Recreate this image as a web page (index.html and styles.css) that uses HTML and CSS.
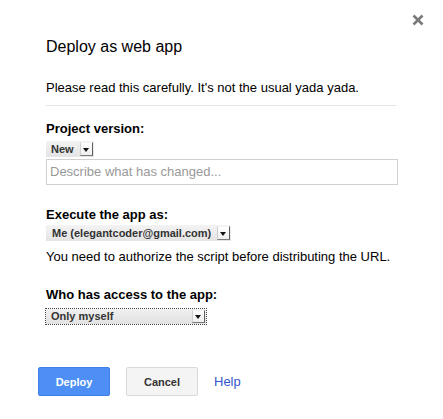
FILE: index.html
```html
<!DOCTYPE html>
<html>
<head>
<meta charset="utf-8">
<link rel="stylesheet" href="styles.css">
</head>
<body>
<div class="dialog">
  <button class="close" aria-label="Close">
    <svg width="12" height="12" viewBox="0 0 12 12"><path d="M1.5 1.5 L10.5 10.5 M10.5 1.5 L1.5 10.5" stroke="#7a7a7a" stroke-width="2.6" stroke-linecap="butt"/></svg>
  </button>
  <h1 class="title">Deploy as web app</h1>
  <p class="intro">Please read this carefully. It's not the usual yada yada.</p>
  <div class="rule"></div>

  <div class="label first">Project version:</div>
  <div class="select sel-new"><span class="sel-text">New</span><span class="sel-btn"><i class="tri"></i></span></div>
  <div class="textbox">Describe what has changed...</div>

  <div class="label exec">Execute the app as:</div>
  <div class="select sel-me"><span class="sel-text">Me (elegantcoder@gmail.com)</span><span class="sel-btn"><i class="tri"></i></span></div>
  <p class="note">You need to authorize the script before distributing the URL.</p>

  <div class="label who">Who has access to the app:</div>
  <div class="select sel-only focused"><span class="sel-text">Only myself</span><span class="sel-btn"><i class="tri"></i></span></div>

  <div class="actions">
    <button class="btn primary">Deploy</button>
    <button class="btn secondary">Cancel</button>
    <a class="help" href="#">Help</a>
  </div>
</div>
</body>
</html>
```
FILE: styles.css
```css
html, body {
  margin: 0;
  padding: 0;
  background: #fff;
}
body {
  font-family: "Liberation Sans", Arial, sans-serif;
  color: #000;
}
.dialog {
  position: relative;
  width: 443px;
  height: 419px;
  box-sizing: border-box;
  padding: 37px 45px 0 46px;
}
.close {
  position: absolute;
  left: 412px;
  top: 14px;
  width: 12px;
  height: 12px;
  padding: 0;
  border: 0;
  background: none;
  display: block;
}
.close svg { display: block; }
.title {
  margin: 0;
  font-size: 16px;
  font-weight: normal;
  line-height: 20px;
  color: #000;
}
.intro {
  margin: 23px 0 0;
  font-size: 13px;
  line-height: 16px;
}
.rule {
  margin-top: 9px;
  width: 350px;
  height: 1px;
  background: #e5e5e5;
}
.label {
  font-size: 13px;
  font-weight: bold;
  line-height: 16px;
}
.label.first { margin-top: 15px; }
.label.exec { margin-top: 22px; }
.label.who { margin-top: 22px; }
.select {
  display: flex;
  align-items: center;
  box-sizing: border-box;
  height: 16px;
  margin-top: 2px;
  background: linear-gradient(#f3f3f3, #e4e4e4);
  font-size: 11px;
  font-weight: bold;
  color: #333;
}
.sel-text {
  flex: 1;
  padding-left: 5px;
  line-height: 16px;
  white-space: nowrap;
}
.sel-btn {
  position: relative;
  width: 13px;
  height: 14px;
  margin-right: 1px;
  background: linear-gradient(#ffffff, #eeeeee);
  border-right: 1px solid #5e5e5e;
  border-bottom: 1px solid #7a7a7a;
  border-left: 1px solid #d0d0d0;
  border-top: 1px solid #f4f4f4;
  box-sizing: border-box;
}
.tri {
  position: absolute;
  left: 2px;
  top: 5px;
  width: 0;
  height: 0;
  border-left: 3.5px solid transparent;
  border-right: 3.5px solid transparent;
  border-top: 4px solid #111;
}
.sel-new { width: 48px; margin-top: 4px; }
.sel-me { width: 185px; margin-top: 2px; }
.sel-me .sel-text { padding-left: 6px; }
.sel-only {
  width: 160px;
  height: 15px;
  margin-top: 6px;
  outline: 1px dotted #444;
  outline-offset: 0;
  background: linear-gradient(#f0f0f0, #e2e2e2);
}
.sel-only .sel-text { line-height: 15px; }
.sel-only .sel-btn { height: 13px; }
.sel-only .tri { top: 4px; }
.textbox {
  box-sizing: border-box;
  width: 352px;
  height: 26px;
  margin-top: 2px;
  border: 1px solid #d0d0d0;
  padding: 0 3px;
  font-size: 13px;
  line-height: 24px;
  color: #999;
}
.note {
  margin: 8px 0 0;
  font-size: 13px;
  line-height: 16px;
  color: #000;
}
.actions {
  display: flex;
  align-items: center;
  margin-top: 43px;
  margin-left: -8px;
}
.btn {
  box-sizing: border-box;
  height: 29px;
  width: 72px;
  padding: 0;
  border-radius: 2px;
  font-family: "Liberation Sans", Arial, sans-serif;
  font-size: 11px;
  font-weight: bold;
}
.primary {
  background: #4d8ff5;
  border: 1px solid #3f7fe8;
  color: #fff;
}
.secondary {
  margin-left: 16px;
  background: #f4f4f4;
  border: 1px solid #dadada;
  color: #333;
}
.help {
  margin-left: 16px;
  font-size: 13px;
  color: #3355cc;
  text-decoration: none;
}
```
